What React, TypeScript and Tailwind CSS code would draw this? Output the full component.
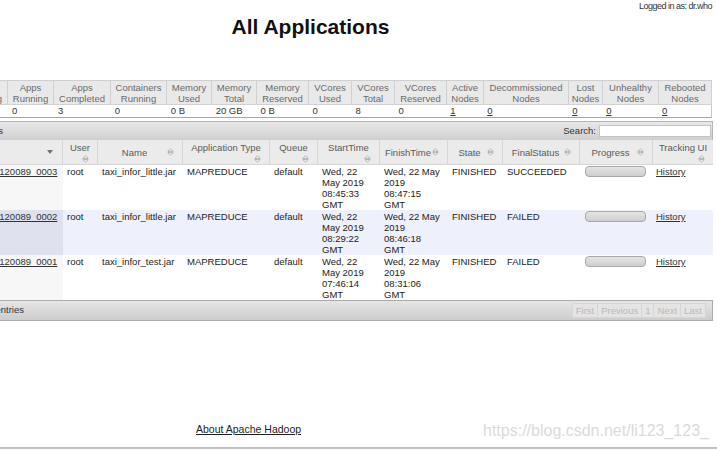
import React from 'react';

const SortBoth = () => (
  <svg width="7" height="8" viewBox="0 0 7 8" className="shrink-0 block">
    <path d="M3.5 0.8 L6.2 3.4 H0.8 Z" fill="#f4f4f4" stroke="#a4a4a4" strokeWidth="0.8" strokeLinejoin="round" />
    <path d="M0.8 4.6 H6.2 L3.5 7.2 Z" fill="#f4f4f4" stroke="#a4a4a4" strokeWidth="0.8" strokeLinejoin="round" />
  </svg>
);

const SortDesc = () => (
  <svg width="6" height="4" viewBox="0 0 6 4" className="shrink-0 block">
    <path d="M0 0 H6 L3 4 Z" fill="#707070" />
  </svg>
);

const metricCols: { w: string; h: [string, string]; v: string; link?: boolean }[] = [
  { w: 'w-[46px]', h: ['Apps', 'Pending'], v: '' },
  { w: 'w-[46px]', h: ['Apps', 'Running'], v: '0' },
  { w: 'w-[57px]', h: ['Apps', 'Completed'], v: '3' },
  { w: 'w-[56px]', h: ['Containers', 'Running'], v: '0' },
  { w: 'w-[45px]', h: ['Memory', 'Used'], v: '0 B' },
  { w: 'w-[45px]', h: ['Memory', 'Total'], v: '20 GB' },
  { w: 'w-[52px]', h: ['Memory', 'Reserved'], v: '0 B' },
  { w: 'w-[43px]', h: ['VCores', 'Used'], v: '0' },
  { w: 'w-[43px]', h: ['VCores', 'Total'], v: '8' },
  { w: 'w-[52px]', h: ['VCores', 'Reserved'], v: '0' },
  { w: 'w-[37px]', h: ['Active', 'Nodes'], v: '1', link: true },
  { w: 'w-[85px]', h: ['Decommissioned', 'Nodes'], v: '0', link: true },
  { w: 'w-[34px]', h: ['Lost', 'Nodes'], v: '0', link: true },
  { w: 'w-[56px]', h: ['Unhealthy', 'Nodes'], v: '0', link: true },
  { w: 'w-[53px]', h: ['Rebooted', 'Nodes'], v: '0', link: true },
];

const appCols: { w: string; label: string; two?: boolean }[] = [
  { w: 'w-[35px]', label: 'User', two: true },
  { w: 'w-[85px]', label: 'Name' },
  { w: 'w-[87px]', label: 'Application Type', two: true },
  { w: 'w-[48px]', label: 'Queue', two: true },
  { w: 'w-[62px]', label: 'StartTime', two: true },
  { w: 'w-[68px]', label: 'FinishTime' },
  { w: 'w-[55px]', label: 'State' },
  { w: 'w-[77px]', label: 'FinalStatus' },
  { w: 'w-[73px]', label: 'Progress' },
  { w: 'w-[60px]', label: 'Tracking UI', two: true },
];

const rows = [
  {
    id: 'application_1558511120089_0003',
    name: 'taxi_infor_little.jar',
    start: ['Wed, 22', 'May 2019', '08:45:33', 'GMT'],
    finish: ['Wed, 22 May', '2019', '08:47:15', 'GMT'],
    final: 'SUCCEEDED',
  },
  {
    id: 'application_1558511120089_0002',
    name: 'taxi_infor_little.jar',
    start: ['Wed, 22', 'May 2019', '08:29:22', 'GMT'],
    finish: ['Wed, 22 May', '2019', '08:46:18', 'GMT'],
    final: 'FAILED',
  },
  {
    id: 'application_1558511120089_0001',
    name: 'taxi_infor_test.jar',
    start: ['Wed, 22', 'May 2019', '07:46:14', 'GMT'],
    finish: ['Wed, 22 May', '2019', '08:31:06', 'GMT'],
    final: 'FAILED',
  },
];

const Lines = ({ lines }: { lines: string[] }) => (
  <>
    {lines.map((l, i) => (
      <div key={i} className="whitespace-nowrap">{l}</div>
    ))}
  </>
);

export default function App() {
  return (
    <div className="relative w-[717px] h-[450px] overflow-hidden bg-white font-['Liberation_Sans',Arial,sans-serif] text-[#222]">
      <div className="flex justify-end pr-[5px] pt-[1px] h-[14px] text-[9px] leading-[11px] tracking-[-0.5px] text-[#333]">
        Logged in as: dr.who
      </div>
      <div className="flex justify-center pr-[96px] mt-[1px] h-[24px]">
        <h1 className="text-[21px] leading-[24px] font-bold text-[#111]">All Applications</h1>
      </div>

      {/* cluster metrics */}
      <div className="mt-[41px] ml-[-38px] w-[750px] text-[9.5px]">
        <div className="flex border-t border-[#cfcfcf] bg-[#e9e9e9] border-b border-b-[#d2d2d2]">
          {metricCols.map((c, i) => (
            <div
              key={i}
              className={`${c.w} h-[23px] flex flex-col justify-center items-center leading-[11px] text-[#6a6a6a] border-r border-[#d0d0d0] whitespace-nowrap`}
            >
              <div>{c.h[0]}</div>
              <div>{c.h[1]}</div>
            </div>
          ))}
        </div>
        <div className="flex h-[13px] border-b border-[#a6a6a6] border-r border-r-[#c8c8c8]">
          {metricCols.map((c, i) => (
            <div key={i} className={`${c.w} pl-[4px] leading-[12px] text-[#333]`}>
              {c.link ? <span className="underline">{c.v}</span> : c.v}
            </div>
          ))}
        </div>
      </div>

      {/* applications */}
      <div className="mt-[3px] ml-[-94px] w-[807px] text-[9.5px]">
        <div className="flex items-center justify-between h-[19px] border border-b-0 border-[#b4b4b4] bg-linear-to-b from-[#e8e8e8] to-[#d0d0d0]">
          <div className="w-[96px] text-right text-[#333] whitespace-nowrap">Show 20 entries</div>
          <div className="flex items-center">
            <span className="text-[#333]">Search:</span>
            <div className="ml-[3px] mr-[1px] w-[112px] h-[12px] bg-white border border-[#c4c4c4]" />
          </div>
        </div>

        <div className="flex h-[25px] bg-[#ebebeb] border-b border-[#d6d6d6] text-[#5a5a5a]">
          <div className="w-[157px] flex items-center pr-[9px] border-r border-[#d6d6d6]">
            <span className="flex-1 text-center">ID</span>
            <SortDesc />
          </div>
          {appCols.map((c, i) =>
            c.two ? (
              <div key={i} className={`${c.w} flex flex-col pt-[2px] border-r border-[#d6d6d6] last:border-r-0`}>
                <div className="text-center leading-[11px] whitespace-nowrap">{c.label}</div>
                <div className="h-[11px] flex items-center justify-end pr-[8px]">
                  <SortBoth />
                </div>
              </div>
            ) : (
              <div key={i} className={`${c.w} flex items-center pl-[4px] pr-[8px] border-r border-[#d6d6d6]`}>
                <span className="flex-1 text-center leading-[11px] whitespace-nowrap">{c.label}</span>
                <SortBoth />
              </div>
            )
          )}
        </div>

        {rows.map((r, ri) => {
          const even = ri % 2 === 1;
          return (
            <div key={ri} className={`flex h-[45px] leading-[11px] ${even ? 'bg-[#eef0fc]' : 'bg-white'}`}>
              <div className={`w-[157px] pl-[7px] pt-[1px] whitespace-nowrap ${even ? 'bg-[#dfe1ee]' : 'bg-[#f7f7f7]'}`}>
                <span className="underline text-[#333]">{r.id}</span>
              </div>
              <div className="w-[35px] pl-[4px] pt-[1px]">root</div>
              <div className="w-[85px] pl-[4px] pt-[1px] whitespace-nowrap">{r.name}</div>
              <div className="w-[87px] pl-[4px] pt-[1px]">MAPREDUCE</div>
              <div className="w-[48px] pl-[4px] pt-[1px]">default</div>
              <div className="w-[62px] pl-[4px] pt-[1px]">
                <Lines lines={r.start} />
              </div>
              <div className="w-[68px] pl-[4px] pt-[1px]">
                <Lines lines={r.finish} />
              </div>
              <div className="w-[55px] pl-[4px] pt-[1px]">FINISHED</div>
              <div className="w-[77px] pl-[4px] pt-[1px]">{r.final}</div>
              <div className="w-[73px] pl-[5px] pt-[1px]">
                <div className="w-[61px] h-[11px] rounded-[4px] border border-[#a8a8a8] bg-linear-to-b from-[#e4e4e4] to-[#cfcfcf]" />
              </div>
              <div className="w-[60px] pl-[3px] pt-[1px]">
                <span className="underline text-[#333]">History</span>
              </div>
            </div>
          );
        })}

        <div className="flex items-center justify-between h-[21px] border border-[#acacac] bg-linear-to-b from-[#e6e6e6] to-[#cdcdcd]">
          <div className="w-[117px] text-right text-[#333] whitespace-nowrap">Showing 1 to 3 of 3 entries</div>
          <div className="flex mr-[6px]">
            {['First', 'Previous', '1', 'Next', 'Last'].map((b) => (
              <div
                key={b}
                className="h-[15px] px-[3px] leading-[13px] border border-[#d6d6d6] -ml-px bg-[#e4e4e4] text-[#b8b8b8]"
              >
                {b}
              </div>
            ))}
          </div>
        </div>
      </div>

      <div className="mt-[102px] ml-[196px] h-[12px] text-[10.5px] leading-[12px]">
        <span className="underline text-[#222]">About Apache Hadoop</span>
      </div>
      <div className="mt-[12px] h-[2px] bg-[#c0c0c0]" />

      <div className="absolute left-[483px] top-[421px] text-[16px] leading-[20px] text-[#dadada] whitespace-nowrap">
        https://blog.csdn.net/li123_123_
      </div>
    </div>
  );
}
